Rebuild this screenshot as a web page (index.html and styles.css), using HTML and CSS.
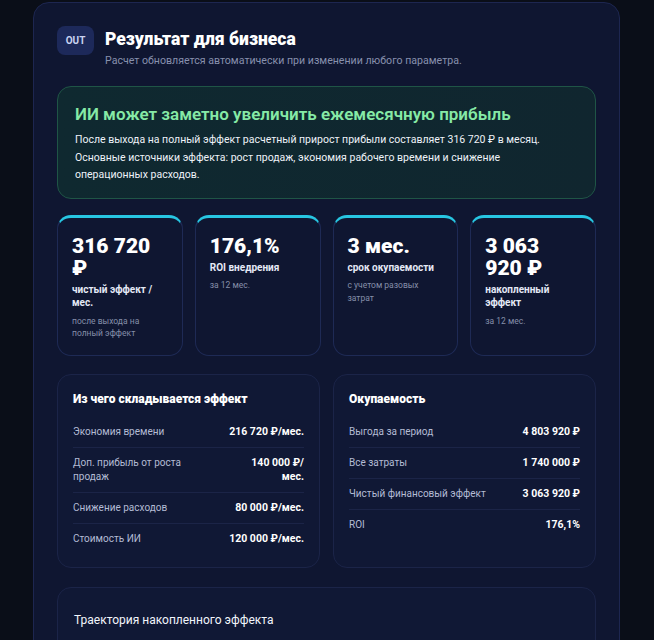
FILE: index.html
```html
<!DOCTYPE html>
<html lang="ru">
<head>
    <meta charset="UTF-8">
    <meta name="viewport" content="width=device-width, initial-scale=1.0">
    <title>Результат для бизнеса</title>
    <link rel="stylesheet" href="styles.css">
</head>
<body>
    <div class="card">
        <div class="header">
            <div class="badge">OUT</div>
            <div>
                <h1>Результат для бизнеса</h1>
                <div class="subtitle">Расчет обновляется автоматически при изменении любого параметра.</div>
            </div>
        </div>

        <div class="verdict">
            <h2>ИИ может заметно увеличить ежемесячную прибыль</h2>
            <p>После выхода на полный эффект расчетный прирост прибыли составляет 316 720 ₽ в месяц.<br>
            Основные источники эффекта: рост продаж, экономия рабочего времени и снижение<br>операционных расходов.</p>
        </div>

        <div class="kpis">
            <div class="kpi">
                <div class="kpi-value">316 720<br>₽</div>
                <div class="kpi-label">чистый эффект / мес.</div>
                <div class="kpi-note">после выхода на полный эффект</div>
            </div>
            <div class="kpi">
                <div class="kpi-value">176,1%</div>
                <div class="kpi-label">ROI внедрения</div>
                <div class="kpi-note">за 12 мес.</div>
            </div>
            <div class="kpi">
                <div class="kpi-value">3 мес.</div>
                <div class="kpi-label">срок окупаемости</div>
                <div class="kpi-note">с учетом разовых затрат</div>
            </div>
            <div class="kpi">
                <div class="kpi-value">3 063<br>920 ₽</div>
                <div class="kpi-label">накопленный эффект</div>
                <div class="kpi-note">за 12 мес.</div>
            </div>
        </div>

        <div class="panels">
            <div class="panel">
                <h3>Из чего складывается эффект</h3>
                <div class="row"><span>Экономия времени</span><b>216 720 ₽/мес.</b></div>
                <div class="row"><span>Доп. прибыль от роста<br>продаж</span><b>140 000 ₽/<br>мес.</b></div>
                <div class="row"><span>Снижение расходов</span><b>80 000 ₽/мес.</b></div>
                <div class="row"><span>Стоимость ИИ</span><b>120 000 ₽/мес.</b></div>
            </div>
            <div class="panel">
                <h3>Окупаемость</h3>
                <div class="row"><span>Выгода за период</span><b>4 803 920 ₽</b></div>
                <div class="row"><span>Все затраты</span><b>1 740 000 ₽</b></div>
                <div class="row"><span>Чистый финансовый эффект</span><b>3 063 920 ₽</b></div>
                <div class="row"><span>ROI</span><b>176,1%</b></div>
            </div>
        </div>

        <div class="chart">
            <div class="chart-title">Траектория накопленного эффекта</div>
        </div>
    </div>
</body>
</html>
```

FILE: styles.css
```css
body {
    margin: 0;
    padding: 2px 34px 0 33px;
    background-color: #0a0e18;
    font-family: Roboto, "Noto Sans", sans-serif;
    color: #fff;
}
.card {
    background: #0f1631;
    border: 1px solid #1d2650;
    border-radius: 16px;
    padding: 23px 23px 0 23px;
    height: 700px;
}
.header {
    display: flex;
    gap: 11px;
}
.badge {
    width: 37px;
    height: 29px;
    border-radius: 8px;
    background: #1d295a;
    color: #c9d2f2;
    font-size: 10px;
    font-weight: bold;
    display: flex;
    align-items: center;
    justify-content: center;
    flex-shrink: 0;
}
h1 {
    margin: 2px 0 0;
    font-size: 17.5px;
    font-weight: 900;
    line-height: 22px;
}
.subtitle {
    margin-top: 4px;
    font-size: 10.6px;
    color: #8790ad;
}
.verdict {
    margin-top: 19px;
    padding: 15px 17px 14px;
    border: 1px solid #1f5546;
    border-radius: 14px;
    background: linear-gradient(90deg, #0f2930, #10262f);
}
h2 {
    margin: 0;
    font-size: 17px;
    font-weight: 600;
    color: #86eaa6;
    line-height: 24px;
}
.verdict p {
    margin: 5px 0 0;
    font-size: 10.5px;
    line-height: 17.5px;
    color: #eef2f8;
}
.kpis {
    display: grid;
    grid-template-columns: repeat(4, 1fr);
    gap: 12px;
    margin-top: 16px;
}
.kpi {
    height: 141px;
    box-sizing: border-box;
    padding: 17px 14px 0;
    border: 1px solid #1e2a55;
    border-top: 3px solid #27c6e2;
    border-radius: 14px;
}
.kpi-value {
    font-size: 21px;
    font-weight: 900;
    line-height: 22px;
}
.kpi-label {
    margin-top: 4px;
    font-size: 10px;
    font-weight: bold;
    line-height: 13.5px;
    color: #e4e9f6;
}
.kpi-note {
    margin-top: 5px;
    font-size: 8.5px;
    line-height: 12.5px;
    color: #858ea9;
}
.panels {
    display: grid;
    grid-template-columns: 1fr 1fr;
    gap: 13px;
    margin-top: 18px;
}
.panel {
    height: 194px;
    box-sizing: border-box;
    padding: 15px 15px 0;
    border: 1px solid #1b2448;
    border-radius: 14px;
    background: #101835;
}
h3 {
    margin: 0 0 9px;
    font-size: 12px;
    font-weight: 900;
    line-height: 18px;
}
.row {
    display: flex;
    justify-content: space-between;
    align-items: flex-start;
    padding: 8px 0 8px;
    border-bottom: 1px solid #1b2447;
    font-size: 10px;
    line-height: 14px;
}
.row:last-child {
    border-bottom: none;
}
.row span {
    color: #b3bbd4;
}
.row b {
    text-align: right;
    color: #fff;
    font-size: 10.5px;
}
.chart {
    margin-top: 19px;
    height: 120px;
    padding: 25px 16px 0;
    border: 1px solid #1b2448;
    border-radius: 14px;
    background: #101835;
}
.chart-title {
    font-size: 12px;
    color: #f2f5fb;
}
```
